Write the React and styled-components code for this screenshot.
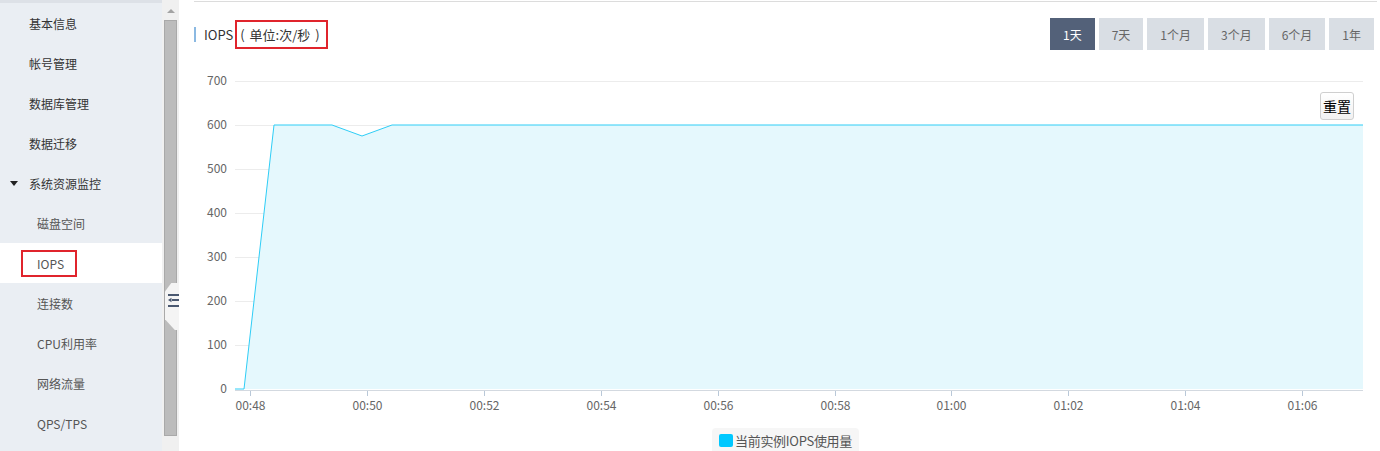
import React from "react";
import styled, { createGlobalStyle } from "styled-components";

const menu = [
  { label: "基本信息" },
  { label: "帐号管理" },
  { label: "数据库管理" },
  { label: "数据迁移" },
  { label: "系统资源监控", caret: true },
  { label: "磁盘空间", sub: true },
  { label: "IOPS", sub: true, active: true },
  { label: "连接数", sub: true },
  { label: "CPU利用率", sub: true },
  { label: "网络流量", sub: true },
  { label: "QPS/TPS", sub: true },
];

const ranges = ["1天", "7天", "1个月", "3个月", "6个月", "1年"];

// chart geometry (local svg coords)
const PLOT_LEFT = 41;
const PLOT_RIGHT = 1169;
const Y0 = 339;
const STEP = 44;
const yTicks = [0, 100, 200, 300, 400, 500, 600, 700];
const xTicks = ["00:48", "00:50", "00:52", "00:54", "00:56", "00:58", "01:00", "01:02", "01:04", "01:06"];
const points = [
  [41, 0],
  [50, 0],
  [80, 600],
  [138, 600],
  [168, 575],
  [198, 600],
  [1169, 600],
];

const toY = (v) => Y0 - (v / 100) * STEP;

const GlobalStyle = createGlobalStyle`
  html, body {
    margin: 0;
    padding: 0;
    background: #fff;
  }
  body {
    font-family: "Noto Sans CJK SC", "Noto Sans", sans-serif;
    color: #333;
  }
`;

const Chart = () => {
  const line = points.map(([x, v]) => `${x},${toY(v)}`).join(" ");
  const area = `${PLOT_LEFT},${Y0} ${line} ${PLOT_RIGHT},${Y0}`;

  return (
    <svg width="1183" height="374" viewBox="0 0 1183 374">
      {yTicks.map((v) => (
        <g key={v}>
          {v > 0 && (
            <line x1={PLOT_LEFT} x2={PLOT_RIGHT} y1={toY(v) + 0.5} y2={toY(v) + 0.5} stroke="#ececec" />
          )}
          <text
            x="33"
            y={toY(v) + 4}
            textAnchor="end"
            fontSize="12"
            fill="#666"
            fontFamily="Noto Sans CJK SC, sans-serif"
          >
            {v}
          </text>
        </g>
      ))}
      <polygon points={area} fill="#e5f8fd" />
      <polyline points={line} fill="none" stroke="#2ecdf6" strokeWidth="1" />
      <line x1={PLOT_LEFT} x2={PLOT_RIGHT} y1="340.5" y2="340.5" stroke="#d3d9e0" />
      {xTicks.map((t, i) => {
        const x = Math.round(56 + i * 116.9) + 0.5;
        return (
          <g key={t}>
            <line x1={x} x2={x} y1="341" y2="346" stroke="#b9c8d8" />
            <text
              x={x}
              y="360"
              textAnchor="middle"
              fontSize="12"
              fill="#666"
              fontFamily="Noto Sans CJK SC, sans-serif"
            >
              {t}
            </text>
          </g>
        );
      })}
    </svg>
  );
};

const App = () => {
  return (
    <>
      <GlobalStyle />
      <Page>
        <SideWrap>
          <Sidebar>
            {menu.map((m) => (
              <MenuItem key={m.label} $sub={m.sub} $active={m.active} $caret={m.caret}>
                {m.caret && <Caret />}
                {m.active ? <Marked $side>{m.label}</Marked> : m.label}
              </MenuItem>
            ))}
          </Sidebar>
          <ScrollBar>
            <ScrollArrow />
            <ScrollThumb />
          </ScrollBar>
          <Toggle>
            <svg width="11" height="13" viewBox="0 0 11 13">
              <rect x="0" y="0" width="11" height="2" fill="#4a5870" />
              <polygon points="0,6 3.5,3.8 3.5,8.2" fill="#4a5870" />
              <rect x="4" y="5" width="7" height="2" fill="#4a5870" />
              <rect x="0" y="11" width="11" height="2" fill="#4a5870" />
            </svg>
          </Toggle>
        </SideWrap>

        <Main>
          <Panel>
            <Header>
              <Title>
                IOPS
                <Marked>( 单位:次/秒 )</Marked>
              </Title>
              <Ranges>
                {ranges.map((r, i) => (
                  <RangeButton key={r} $active={i === 0}>
                    {r}
                  </RangeButton>
                ))}
              </Ranges>
            </Header>
            <ChartBox>
              <Chart />
              <ResetButton>重置</ResetButton>
            </ChartBox>
            <Legend>
              <LegendSwatch />
              当前实例IOPS使用量
            </Legend>
          </Panel>
        </Main>
      </Page>
    </>
  );
};

const Page = styled.div`
  display: flex;
  width: 1380px;
  height: 451px;
  overflow: hidden;
`;

const SideWrap = styled.div`
  position: relative;
  display: flex;
  flex: 0 0 179px;
`;

const Sidebar = styled.div`
  width: 162px;
  background: #eaeef3;
  border-top: 3px solid #dde1e7;
`;

const MenuItem = styled.div`
  display: flex;
  align-items: center;
  height: 40px;
  padding-left: ${(p) => (p.$caret ? "10px" : p.$sub ? "37px" : "29px")};
  font-size: 12px;
  color: ${(p) => (p.$sub ? "#555" : "#333")};
  background: ${(p) => (p.$active ? "#fff" : "transparent")};
  white-space: nowrap;
`;

const Caret = styled.span`
  width: 0;
  height: 0;
  margin-right: 11px;
  border-left: 4px solid transparent;
  border-right: 4px solid transparent;
  border-top: 5px solid #222;
`;

const Marked = styled.span`
  display: inline-block;
  border: 2px solid #e0242c;
  padding: ${(p) => (p.$side ? "3px 11px 3px 14px" : "4px 6px 4px 3px")};
  margin-left: ${(p) => (p.$side ? "-16px" : "2px")};
  line-height: 17px;
  word-spacing: ${(p) => (p.$side ? "0" : "2px")};
`;

const ScrollBar = styled.div`
  width: 17px;
  background: #f0f0f0;
  display: flex;
  flex-direction: column;
  align-items: center;
`;

const ScrollArrow = styled.div`
  margin-top: 9px;
  width: 0;
  height: 0;
  border-left: 4px solid transparent;
  border-right: 4px solid transparent;
  border-bottom: 4px solid #a3a3a3;
`;

const ScrollThumb = styled.div`
  margin-top: 7px;
  width: 11px;
  height: 414px;
  background: #bcbcbc;
  border: 1px solid #a9a9a9;
`;

const Toggle = styled.div`
  position: absolute;
  top: 283px;
  left: 165px;
  width: 14px;
  height: 47px;
  background: #f4f4f4;
  clip-path: polygon(45% 0, 100% 0, 100% 100%, 70% 100%, 0 77%, 0 18%);
  display: flex;
  align-items: center;
  justify-content: flex-end;
  box-sizing: border-box;

  & svg {
    margin-top: -12px;
  }
`;

const Main = styled.div`
  flex: 1;
  padding: 1px 3px 0 15px;
  min-width: 0;
`;

const Panel = styled.div`
  border-top: 1px solid #dcdcdc;
  display: flex;
  flex-direction: column;
`;

const Header = styled.div`
  display: flex;
  align-items: center;
  justify-content: space-between;
  margin-top: 16px;
  height: 32px;
  padding-right: 3px;
`;

const Title = styled.div`
  display: flex;
  align-items: center;
  height: 15px;
  padding-left: 8px;
  border-left: 2px solid #8bb9e2;
  font-size: 13px;
  color: #333;
  white-space: pre;
`;

const Ranges = styled.div`
  display: flex;
  gap: 4px;
`;

const RangeButton = styled.button`
  height: 32px;
  padding: 0 13px;
  border: none;
  border-radius: 0;
  font-family: inherit;
  font-size: 12px;
  color: ${(p) => (p.$active ? "#fff" : "#666")};
  background: ${(p) => (p.$active ? "#536179" : "#d9dee4")};
  cursor: pointer;
`;

const ChartBox = styled.div`
  position: relative;
  height: 374px;
`;

const ResetButton = styled.button`
  position: absolute;
  top: 42px;
  left: 1126px;
  width: 34px;
  height: 28px;
  padding: 0;
  font-family: inherit;
  font-size: 14px;
  color: #000;
  background: linear-gradient(#ffffff, #f1f1f1);
  border: 1px solid #cfcfcf;
  border-radius: 3px;
`;

const Legend = styled.div`
  align-self: center;
  display: flex;
  align-items: center;
  gap: 2px;
  margin-top: 4px;
  padding: 3px 7px 4px 7px;
  background: #f6f6f6;
  border-radius: 4px;
  font-size: 13px;
  color: #555;
  letter-spacing: -0.3px;
`;

const LegendSwatch = styled.span`
  width: 14px;
  height: 13px;
  border-radius: 2px;
  background: #00c8ff;
`;

export default App;
